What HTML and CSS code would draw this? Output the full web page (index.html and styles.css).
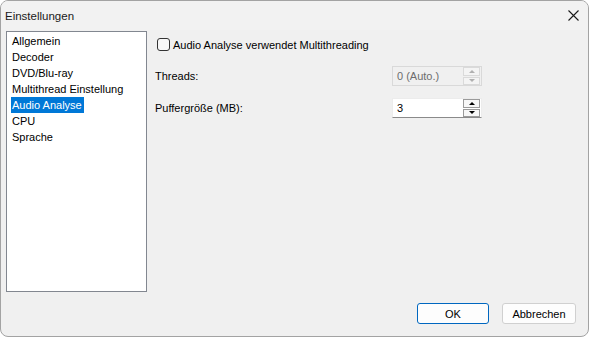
FILE: index.html
```html
<!DOCTYPE html>
<html lang="de">
<head>
<meta charset="utf-8">
<title>Einstellungen</title>
<link rel="stylesheet" href="styles.css">
</head>
<body>
<div class="window">
  <div class="titlebar">
    <span class="title">Einstellungen</span>
    <svg class="close" width="11" height="11" viewBox="0 0 11 11"><path d="M0.5 0.5 L10.5 10.5 M10.5 0.5 L0.5 10.5" stroke="#1a1a1a" stroke-width="1.1" fill="none"/></svg>
  </div>
  <div class="body">
    <div class="content">
      <ul class="list">
        <li class="item">Allgemein</li>
        <li class="item">Decoder</li>
        <li class="item">DVD/Blu-ray</li>
        <li class="item">Multithread Einstellung</li>
        <li class="item selected">Audio Analyse</li>
        <li class="item">CPU</li>
        <li class="item">Sprache</li>
      </ul>
      <div class="panel">
        <label class="check"><span class="box"></span><span class="check-label">Audio Analyse verwendet Multithreading</span></label>
        <div class="row row-threads">
          <span class="label">Threads:</span>
          <div class="spin disabled">
            <span class="spin-field">0 (Auto.)</span>
            <span class="spin-btns">
              <span class="spin-btn"><span class="arr up"></span></span>
              <span class="spin-btn"><span class="arr down"></span></span>
            </span>
          </div>
        </div>
        <div class="row row-buffer">
          <span class="label">Puffergröße (MB):</span>
          <div class="spin">
            <span class="spin-field">3</span>
            <span class="spin-btns">
              <span class="spin-btn"><span class="arr up"></span></span>
              <span class="spin-btn"><span class="arr down"></span></span>
            </span>
          </div>
        </div>
      </div>
    </div>
    <div class="buttons">
      <button class="btn btn-ok">OK</button>
      <button class="btn btn-cancel">Abbrechen</button>
    </div>
  </div>
</div>
</body>
</html>
```
FILE: styles.css
```css
html, body {
  margin: 0;
  padding: 0;
  background: #ffffff;
}
.window {
  width: 589px;
  height: 337px;
  box-sizing: border-box;
  border: 1px solid #a3a3a3;
  border-radius: 8px;
  overflow: hidden;
  background: #f0f0f0;
  font-family: "Liberation Sans", Arial, sans-serif;
  font-size: 11px;
  color: #000;
  display: flex;
  flex-direction: column;
}
.titlebar {
  height: 29px;
  flex: none;
  display: flex;
  align-items: center;
  justify-content: space-between;
  padding: 0 9px 0 4px;
  background: #f2f2f2;
}
.title {
  font-size: 11.5px;
  color: #1a1a1a;
}
.close {
  display: block;
  margin-top: -1px;
}
.body {
  flex: 1;
  display: flex;
  flex-direction: column;
  padding: 1px 12px 0 5px;
}
.content {
  display: flex;
  gap: 8px;
}
.list {
  list-style: none;
  margin: 0;
  padding: 1px 4px;
  width: 141px;
  height: 261px;
  box-sizing: border-box;
  border: 1px solid #828790;
  background: #ffffff;
  display: flex;
  flex-direction: column;
  align-items: flex-start;
  font-size: 11px;
}
.item {
  height: 16px;
  line-height: 16px;
  padding: 0 2px 0 1px;
  color: #000;
  white-space: nowrap;
}
.item.selected {
  background: #0078d7;
  color: #ffffff;
}
.panel {
  flex: 1;
  padding-top: 7px;
  display: flex;
  flex-direction: column;
}
.check {
  display: flex;
  align-items: center;
  height: 13px;
  margin-left: 2px;
}
.box {
  width: 13px;
  height: 13px;
  box-sizing: border-box;
  border: 1px solid #333333;
  border-radius: 3px;
  background: #f7f7f7;
  margin-right: 3px;
  flex: none;
}
.row {
  display: flex;
  align-items: center;
}
.row-threads {
  margin-top: 15px;
}
.row-buffer {
  margin-top: 12px;
}
.label {
  width: 237px;
  flex: none;
}
.spin {
  width: 90px;
  height: 20px;
  box-sizing: border-box;
  display: flex;
  border: 1px solid #ececec;
  border-bottom-color: #8a8a8a;
  background: #ffffff;
}
.spin-field {
  flex: 1;
  padding-left: 4px;
  line-height: 18px;
}
.spin-btns {
  width: 17px;
  display: flex;
  flex-direction: column;
  gap: 1px;
  padding: 0 1px 0 0;
}
.spin-btn {
  flex: 1;
  display: flex;
  align-items: center;
  justify-content: center;
  border: 1px solid #9a9a9a;
  background: #f7f7f7;
}
.arr {
  width: 0;
  height: 0;
  border-left: 3px solid transparent;
  border-right: 3px solid transparent;
}
.arr.up {
  border-bottom: 3px solid #000;
}
.arr.down {
  border-top: 3px solid #000;
}
.spin.disabled {
  background: #f0f0f0;
  border-color: #d9d9d9;
}
.spin.disabled .spin-field {
  color: #6d6d6d;
}
.spin.disabled .spin-btn {
  border-color: #dadada;
  background: #f4f4f4;
}
.spin.disabled .arr.up {
  border-bottom-color: #b0b0b0;
}
.spin.disabled .arr.down {
  border-top-color: #b0b0b0;
}
.buttons {
  display: flex;
  justify-content: flex-end;
  gap: 13px;
  margin-top: 11px;
}
.btn {
  height: 21px;
  box-sizing: border-box;
  font-family: "Liberation Sans", Arial, sans-serif;
  font-size: 11px;
  color: #000;
  border-radius: 3px;
  background: #fdfdfd;
  border: 1px solid #d0d0d0;
  padding: 0;
}
.btn-ok {
  width: 72px;
  border-color: #0067c0;
}
.btn-cancel {
  width: 74px;
}
```
